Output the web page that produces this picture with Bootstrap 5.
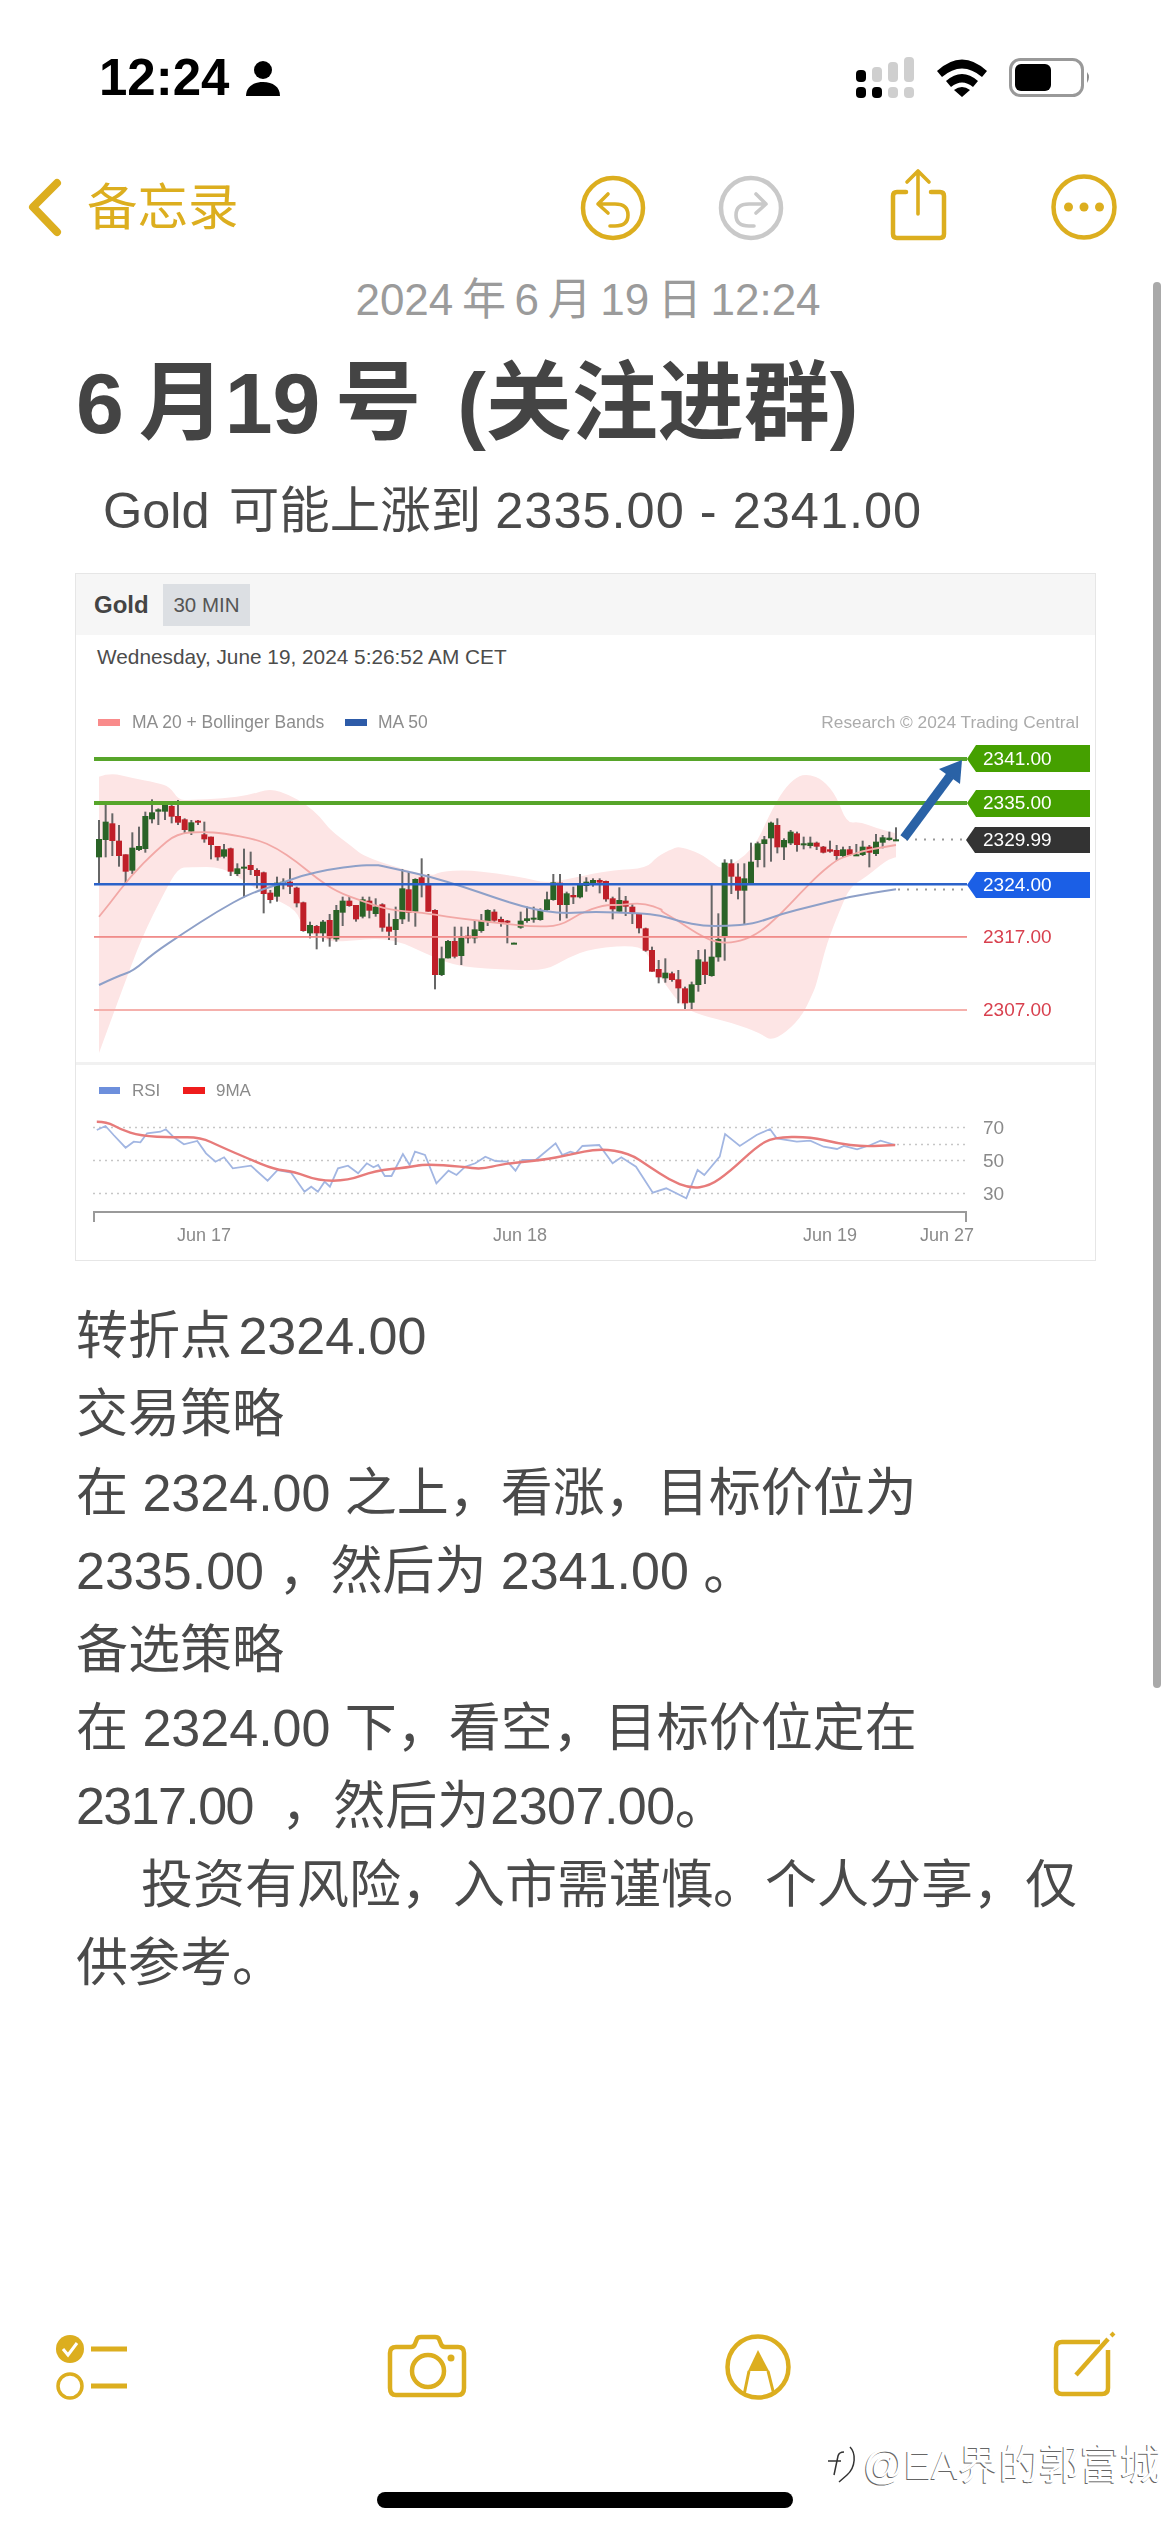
<!DOCTYPE html>
<html lang="zh">
<head>
    <meta charset="UTF-8">
    <meta name="viewport" content="width=device-width, initial-scale=1.0">
    <title>备忘录</title>
    <link href="https://cdn.jsdelivr.net/npm/bootstrap@5.3.0/dist/css/bootstrap.min.css" rel="stylesheet">
    <style>
        html, body { margin: 0; background: #fff; }
        .phone {
            width: 1170px;
            height: 2532px;
            overflow: hidden;
            font-family: "Liberation Sans", "Noto Sans CJK SC", sans-serif;
            color: #4a4a4a;
        }
        .phone svg { display: block; flex: none; }

        /* status bar */
        .status-row { height: 165px; padding: 50px 0 0 99px; }
        .status-time { font-size: 51px; font-weight: 700; line-height: 55px; color: #000; width: 147px; }
        .status-person { margin-top: 11px; }
        .status-icons { margin: 6px 0 0 573px; }

        /* notes nav */
        .notes-nav { height: 86px; padding-left: 24px; color: #dcae1f; }
        .back-label { font-size: 50.5px; line-height: 86px; margin-left: 23px; width: 490px; }
        .nav-gap-redo { margin-left: 65px; }
        .nav-gap-share { margin-left: 99px; }
        .nav-gap-more { margin-left: 98px; }

        /* note header */
        .note-date { font-size: 44px; line-height: 98px; color: #9b9b9b; text-align: center; width: 1176px; word-spacing: -3.6px; }
        .note-title { font-size: 86px; font-weight: 700; line-height: 108px; color: #444; margin: 0; padding-left: 76px; white-space: nowrap; word-spacing: -9px; }
        .title-paren { margin-left: 21px; }
        .note-sub { font-size: 50.5px; line-height: 108px; padding-left: 103px; white-space: nowrap; }
        .sub-symbol { margin-right: 5px; }
        .num-wide { letter-spacing: 1px; }

        /* chart */
        .chart-box { width: 1021px; height: 688px; margin: 8px 0 0 75px; border: 1px solid #e6e6e6; color: #444; }
        .chart-head { height: 61px; background: #f6f6f6; padding-left: 18px; }
        .chart-symbol { font-size: 24px; font-weight: 700; width: 69px; }
        .chart-chip { width: 87px; height: 42px; background: #dcdfe3; font-size: 20.5px; line-height: 42px; text-align: center; color: #555; }
        .chart-date { height: 45px; padding-left: 21px; font-size: 20.8px; line-height: 44px; color: #4c4c4c; }
        .chart-svg { filter: blur(.55px); }
        .chart-svg text { font-family: "Liberation Sans", sans-serif; }

        /* note body */
        .note-body { margin-top: 36px; padding-left: 76px; font-size: 52px; line-height: 78.4px; white-space: pre; }
        .pivot-line { word-spacing: -8px; }
        .num-tight { letter-spacing: -1.6px; margin-right: 14px; }
        .num-gap { margin-left: 1px; letter-spacing: -.5px; }
        .note-indent { padding-left: 65px; }

        /* bottom */
        .tool-row { margin-top: auto; height: 80px; margin-bottom: 84px; padding-left: 52px; }
        .tool-gap-camera { margin-left: 254px; }
        .tool-gap-markup { margin-left: 253px; }
        .tool-gap-compose { margin-left: 259px; }
        .home-bar { width: 416px; height: 16px; margin: 0 0 24px 377px; border-radius: 8px; background: #000; }

        .scroll-thumb { position: absolute; left: 1153px; top: 282px; width: 8px; height: 1406px; border-radius: 4px; background: #a9a9a9; }
        .watermark { position: absolute; left: 825px; top: 2441px; font-size: 40.5px; line-height: 48px; color: #fff; text-shadow: -1px 1px 0 #666; white-space: nowrap; }
        .watermark svg { position: absolute; left: -3px; top: 0; }
        .watermark span { margin-left: 38px; }
    </style>
</head>
<body>
<div class="phone position-relative d-flex flex-column">

    <div class="status-row d-flex align-items-start">
        <div class="status-time">12:24</div>
        <svg class="status-person" width="34" height="36" viewBox="246 61 34 36">
            <circle cx="263" cy="70" r="9" fill="#000"/>
            <path d="M246 96c0-9 7-14 17-14s17 5 17 14z" fill="#000"/>
        </svg>
        <svg class="status-icons" width="240" height="42" viewBox="853 56 240 42">
            <g fill="#000">
                <rect x="856" y="70" width="10" height="12" rx="4"/>
                <rect x="856" y="87" width="10" height="11" rx="4"/>
                <rect x="872" y="87" width="10" height="11" rx="4"/>
            </g>
            <g fill="#cfcfcf">
                <rect x="872" y="67" width="10" height="15" rx="4"/>
                <rect x="888" y="62" width="10" height="20" rx="4"/>
                <rect x="904" y="57" width="10" height="25" rx="4"/>
                <rect x="888" y="87" width="10" height="11" rx="4"/>
                <rect x="904" y="87" width="10" height="11" rx="4"/>
            </g>
            <path d="M937 71q25-23 50 0l-5 6q-20-17-40 0zM946 81q16-14 32 0l-5 6q-11-9-22 0zM954 90q8-6 16 0l-8 7z" fill="#000"/>
            <rect x="1010.5" y="59.5" width="72" height="36" rx="10" fill="none" stroke="#999" stroke-width="3"/>
            <rect x="1015" y="64" width="36" height="27" rx="6" fill="#000"/>
            <path d="M1087 72q4 5 0 11z" fill="#8a8a8a"/>
        </svg>
    </div>

    <div class="notes-nav d-flex align-items-center">
        <svg width="40" height="62" viewBox="24 177 40 62">
            <path d="M57 183 33 207l24 25" fill="none" stroke="#dcae1f" stroke-width="8" stroke-linecap="round" stroke-linejoin="round"/>
        </svg>
        <div class="back-label">备忘录</div>
        <svg width="73" height="86" viewBox="577 165 73 86" fill="none" stroke="#dcae1f" stroke-linecap="round" stroke-linejoin="round">
            <circle cx="613" cy="208" r="30" stroke-width="4.5"/>
            <path d="M608 194l-10 10 10 9M598 204h17q13 0 13 11 0 11-13 11h-5" stroke-width="3.6"/>
        </svg>
        <svg class="nav-gap-redo" width="73" height="86" viewBox="715 165 73 86" fill="none" stroke="#c9c9c9" stroke-linecap="round" stroke-linejoin="round">
            <circle cx="751" cy="208" r="30" stroke-width="4.5"/>
            <path d="M756 194l10 10-10 9M766 204h-17q-13 0-13 11 0 11 13 11h5" stroke-width="3.6"/>
        </svg>
        <svg class="nav-gap-share" width="63" height="86" viewBox="887 165 63 86" fill="none" stroke="#dcae1f" stroke-linecap="round" stroke-linejoin="round">
            <path d="M906 192h-9q-4 0-4 4v38q0 4 4 4h43q4 0 4-4v-38q0-4-4-4h-9" stroke-width="4.5"/>
            <path d="M918 214v-43M907 182l11-11 11 11" stroke-width="3.6"/>
        </svg>
        <svg class="nav-gap-more" width="72" height="86" viewBox="1048 165 72 86">
            <circle cx="1084" cy="207" r="30.5" fill="none" stroke="#dcae1f" stroke-width="4.5"/>
            <g fill="#dcae1f"><circle cx="1068.500" cy="207" r="4.500"/><circle cx="1084" cy="207" r="4.500"/><circle cx="1099.500" cy="207" r="4.500"/></g>
        </svg>
    </div>

    <div class="note-date">2024 年 6 月 19 日 12:24</div>
    <h1 class="note-title">6 月19 号<span class="title-paren"> (关注进群)</span></h1>
    <div class="note-sub"><span class="sub-symbol">Gold</span> 可能上涨到 <span class="num-wide">2335.00 - 2341.00</span></div>

    <div class="chart-box">
        <div class="chart-head d-flex align-items-center">
            <div class="chart-symbol">Gold</div>
            <div class="chart-chip">30 MIN</div>
        </div>
        <div class="chart-date">Wednesday, June 19, 2024 5:26:52 AM CET</div>
        <svg class="chart-svg" id="plot" width="1019" height="581" viewBox="76 680 1019 581">
            <path id="band" fill="#fde5e5"/>
            <g id="candles"></g>
            <path id="ma20" fill="none" stroke="#f2a8a6" stroke-width="1.800"/>
            <path id="ma50" fill="none" stroke="#8ea0c8" stroke-width="2"/>

            <g>
                <rect x="94" y="757" width="873" height="4" fill="#57a52a"/>
                <rect x="94" y="801" width="873" height="4" fill="#57a52a"/>
                <rect x="94" y="883" width="873" height="2.500" fill="#2b62c9"/>
                <rect x="94" y="936" width="873" height="1.800" fill="#f08c8a"/>
                <rect x="94" y="1009" width="873" height="2" fill="#f5b0ac"/>
            </g>
            <path d="M906 839.500h60M898 889.500h68" stroke="#999" stroke-width="2" stroke-dasharray="2 7"/>

            <path d="M904 838 950 776" stroke="#2a62a6" stroke-width="9"/>
            <path d="M962 760 960 784 939 769z" fill="#2a62a6"/>

            <g fill="#45a000"><path d="M967 759l9-14h114v27H976z"/><path d="M967 803l9-13h114v27H976z"/></g>
            <path d="M966 840l9-13h115v26H975z" fill="#333"/>
            <path d="M967 885l9-13h114v26H976z" fill="#1b5fe6"/>
            <g font-size="19" fill="#fff">
                <text x="983" y="765">2341.00</text>
                <text x="983" y="809">2335.00</text>
                <text x="983" y="846">2329.99</text>
                <text x="983" y="891">2324.00</text>
            </g>
            <g font-size="19" fill="#d8404e">
                <text x="983" y="943">2317.00</text>
                <text x="983" y="1016">2307.00</text>
            </g>

            <rect x="98" y="719" width="22" height="7" fill="#f98b8b"/>
            <rect x="345" y="719" width="22" height="7" fill="#2d5ba8"/>
            <g font-size="17.5" fill="#8d8d8d">
                <text x="132" y="728">MA 20 + Bollinger Bands</text>
                <text x="378" y="728">MA 50</text>
            </g>
            <text x="1079" y="728" font-size="17.3" fill="#ababab" text-anchor="end">Research © 2024 Trading Central</text>

            <rect x="76" y="1062" width="1019" height="3" fill="#f1f1f1"/>

            <rect x="99" y="1087" width="21" height="7" fill="#6d8fdc"/>
            <rect x="183" y="1087" width="22" height="7" fill="#ef1c1c"/>
            <g font-size="17" fill="#8a8a8a">
                <text x="132" y="1096">RSI</text>
                <text x="216" y="1096">9MA</text>
            </g>
            <path d="M93 1127.500h874M93 1160.500h874M93 1193.500h874M897 1144.500h70" stroke="#c6c6c6" stroke-width="1.500" stroke-dasharray="2 4"/>
            <path id="rsi" fill="none" stroke="#a2b6e2" stroke-width="1.800"/>
            <path id="rsima" fill="none" stroke="#e77b7a" stroke-width="2.400"/>
            <path d="M94 1222v-10h872v10" fill="none" stroke="#9a9a9a" stroke-width="2"/>
            <g font-size="19" fill="#8a8a8a">
                <text x="983" y="1134">70</text>
                <text x="983" y="1167">50</text>
                <text x="983" y="1200">30</text>
            </g>
            <g font-size="18" fill="#8a8a8a" text-anchor="middle">
                <text x="204" y="1241">Jun 17</text>
                <text x="520" y="1241">Jun 18</text>
                <text x="830" y="1241">Jun 19</text>
                <text x="947" y="1241">Jun 27</text>
            </g>
        </svg>
    </div>

    <div class="note-body"><div class="pivot-line">转折点 2324.00</div><div>交易策略</div><div>在 2324.00 之上，看涨，目标价位为</div><div>2335.00 ，然后为 2341.00 。</div><div>备选策略</div><div>在 2324.00 下，看空，目标价位定在</div><div><span class="num-tight">2317.00</span> ，然后为<span class="num-gap">2307.00</span>。</div><div class="note-indent">投资有风险，入市需谨慎。个人分享，仅</div><div>供参考。</div></div>

    <div class="tool-row d-flex align-items-center">
        <svg width="80" height="80" viewBox="52 2325 80 80">
            <circle cx="70" cy="2346" r="14" fill="#dcae1f"/>
            <path d="M63 2346l5 6 9-12" fill="none" stroke="#fff" stroke-width="3"/>
            <circle cx="70" cy="2383" r="12" fill="none" stroke="#dcae1f" stroke-width="3.500"/>
            <path d="M91 2346h36M91 2383h36" stroke="#dcae1f" stroke-width="5"/>
        </svg>
        <svg class="tool-gap-camera" width="84" height="80" viewBox="386 2325 84 80" fill="none" stroke="#dcae1f" stroke-width="4.500" stroke-linejoin="round">
            <path d="M396 2344h15q3 0 4-3l2-5q1-2 4-2h14q3 0 4 2l2 5q1 3 4 3h13q6 0 6 6v35q0 7-6 7h-62q-6 0-6-7v-35q0-6 6-6z"/>
            <circle cx="428" cy="2368" r="16"/>
            <circle cx="451" cy="2355" r="3.500" fill="#dcae1f" stroke="none"/>
        </svg>
        <svg class="tool-gap-markup" width="70" height="80" viewBox="723 2325 70 80" fill="none" stroke="#dcae1f">
            <circle cx="758" cy="2364" r="30.500" stroke-width="4.500"/>
            <path d="M758 2347l-10 21h21z" fill="#dcae1f" stroke="none"/>
            <path d="M749 2368l-5 24M768 2368l6 24" stroke-width="3"/>
        </svg>
        <svg class="tool-gap-compose" width="66" height="80" viewBox="1052 2325 66 80" fill="none" stroke="#dcae1f">
            <path d="M1100 2339h-38q-6 0-6 6v40q0 6 6 6h40q6 0 6-6v-38" stroke-width="4.500"/>
            <path d="M1076 2372l32-36" stroke-width="4.500"/>
            <path d="M1111 2333l3-3" stroke-width="4"/>
        </svg>
    </div>
    <div class="home-bar"></div>

    <div class="scroll-thumb"></div>
    <div class="watermark">
        <svg width="40" height="48" viewBox="0 0 40 48" fill="none" stroke="#333" stroke-width="1.500">
            <path d="M12 34 16 15q1-4 6-4M6 20h13M28 6c6 6 6 20-3 28l-8 7"/>
        </svg>
        <span>@EA界的郭富城</span>
    </div>
</div>

<script>
    // candle coords are read off three crops: [x, high, low, top, bottom, colour], y = 770 + v / 3
    const crops = [
        [90, [[27,150,345,207,262,'g'],[47,95,262,155,210,'g'],[67,130,258,160,213,'r'],[87,165,290,212,258,'r'],[107,253,345,253,305,'r'],[127,187,312,233,302,'g'],[147,170,243,228,240,'g'],[166,125,248,138,237,'g'],[186,88,160,127,148,'g'],[205,115,165,118,125,'g'],[225,95,150,103,125,'g'],[245,95,160,108,140,'r'],[264,90,165,138,158,'r'],[284,145,192,148,180,'r'],[304,150,195,157,185,'g'],[324,150,165,152,158,'r'],[343,155,218,193,208,'r'],[363,200,268,200,225,'r'],[383,228,272,228,262,'r'],[402,222,265,238,260,'g'],[422,233,318,235,305,'r'],[442,280,318,295,312,'g'],[462,236,382,290,296,'g'],[482,245,315,285,300,'r'],[501,295,355,300,318,'r'],[521,305,430,307,372,'r'],[541,360,400,368,390,'r'],[561,320,395,338,380,'g'],[580,325,358,335,345,'g'],[600,295,372,335,350,'r'],[620,350,412,353,400,'r'],[640,395,485,397,483,'r'],[660,455,505,465,490,'g'],[680,465,538,468,490,'r'],[699,450,515,455,490,'g'],[719,432,530,450,505,'r'],[739,405,515,420,508,'g'],[758,380,468,392,428,'g'],[778,378,410,392,408,'r'],[798,405,455,405,448,'r'],[818,380,445,388,440,'g'],[838,380,445,392,422,'r'],[857,385,440,410,432,'g'],[877,400,485,403,473,'r']]],
        [380, [[27,430,510,470,485,'r'],[47,410,525,447,480,'g'],[67,297,462,355,448,'g'],[86,305,455,358,428,'r'],[106,325,470,327,425,'g'],[125,265,382,322,343,'r'],[145,312,425,340,425,'r'],[165,418,658,420,615,'r'],[185,530,618,565,615,'g'],[204,510,565,513,565,'g'],[224,470,565,513,560,'r'],[244,470,585,503,558,'g'],[264,470,520,497,505,'r'],[284,450,520,478,505,'g'],[304,432,488,452,483,'g'],[323,418,468,420,455,'g'],[343,418,458,425,452,'r'],[363,440,470,447,458,'r'],[382,450,520,452,456,'r'],[402,518,520,518,521,'g'],[422,425,476,452,473,'g'],[441,410,458,445,453,'g'],[461,410,458,443,448,'g'],[481,415,452,420,450,'g'],[501,365,422,388,420,'g'],[520,312,392,337,390,'g'],[540,312,452,338,405,'r'],[560,365,445,370,405,'g'],[580,350,402,375,382,'r'],[600,312,385,345,382,'g'],[619,322,365,335,348,'g'],[639,325,350,330,340,'g'],[659,325,370,330,338,'r'],[678,332,395,333,388,'r'],[698,380,448,385,418,'r'],[718,352,428,390,425,'g'],[737,378,438,392,410,'r'],[757,400,462,410,430,'r'],[777,430,490,432,475,'r'],[797,473,545,475,542,'r'],[816,530,605,540,605,'r'],[836,570,640,597,622,'r'],[856,565,638,608,625,'g'],[876,605,635,610,630,'r']]],
        [660, [[55,600,700,628,655,'r'],[75,650,720,655,700,'r'],[95,635,720,643,698,'g'],[115,540,665,568,645,'g'],[135,538,642,575,615,'r'],[155,345,620,560,618,'g'],[175,430,575,507,562,'g'],[194,268,572,278,500,'g'],[214,268,372,280,320,'r'],[234,280,388,320,362,'r'],[253,280,465,325,362,'g'],[273,218,345,275,340,'g'],[293,215,292,220,270,'g'],[313,198,292,208,222,'g'],[333,155,275,158,205,'g'],[352,145,250,165,232,'r'],[372,205,270,210,232,'g'],[392,180,225,185,220,'g'],[411,185,245,190,225,'r'],[431,200,238,220,226,'g'],[451,200,235,218,228,'g'],[470,215,240,218,230,'r'],[490,228,250,230,248,'r'],[510,212,248,238,245,'r'],[530,225,272,240,258,'r'],[549,230,262,238,258,'g'],[569,228,258,238,255,'r'],[589,222,258,253,257,'g'],[608,212,258,230,255,'g'],[628,225,292,230,248,'r'],[648,192,258,215,252,'g'],[668,195,235,202,218,'g'],[688,185,212,203,210,'g'],[708,172,212,208,210,'g']]]
    ];
    const toY = v => 770 + v / 3;
    let svgCandles = '';
    crops.forEach(([left, rows]) => rows.forEach(([x, hi, lo, top, bot, c]) => {
        const px = left + x / 3;
        const fill = c === 'g' ? '#2a6327' : '#bf1f28';
        svgCandles += `<rect x="${px - 1}" y="${toY(hi)}" width="2" height="${(lo - hi) / 3}" fill="#666"/>`;
        svgCandles += `<rect x="${px - 3}" y="${toY(top)}" width="6" height="${Math.max((bot - top) / 3, 2)}" fill="${fill}"/>`;
    }));
    document.getElementById('candles').innerHTML = svgCandles;

    // straight segments for the noisy rsi, midpoint curves for the averages and the band
    const line = pts => 'M' + pts.map(p => p.map(n => n.toFixed(1)).join(' ')).join('L');
    const curve = pts => {
        let d = `M${pts[0][0].toFixed(1)} ${pts[0][1].toFixed(1)}`;
        for (let i = 1; i < pts.length - 1; i++) {
            const mx = (pts[i][0] + pts[i + 1][0]) / 2, my = (pts[i][1] + pts[i + 1][1]) / 2;
            d += `Q${pts[i][0].toFixed(1)} ${pts[i][1].toFixed(1)} ${mx.toFixed(1)} ${my.toFixed(1)}`;
        }
        const last = pts[pts.length - 1];
        return d + `L${last[0].toFixed(1)} ${last[1].toFixed(1)}`;
    };
    const from = (left, pts) => pts.map(([x, y]) => [left + x / 3, 770 + y / 3]);

    const ma20 = [...from(90, [[27,440],[60,400],[120,320],[200,240],[260,190],[340,185],[400,190],[500,208],[560,235],[620,275],[680,325],[740,365],[820,395]]),
        ...from(380, [[30,420],[130,428],[200,440],[280,450],[380,462],[460,470],[540,468],[600,430],[670,405],[720,405],[790,398],[850,420]]),
        ...from(660, [[0,422],[50,450],[110,490],[160,515],[220,520],[290,495],[360,435],[420,370],[480,310],[530,270],[560,258],[620,240],[708,225]])];
    document.getElementById('ma20').setAttribute('d', curve(ma20));

    const ma50 = [...from(90, [[27,645],[80,620],[130,603],[190,550],[280,490],[380,425],[480,370],[560,345],[640,315],[720,298],[800,287],[860,285]]),
        ...from(380, [[0,287],[60,300],[150,320],[250,350],[350,385],[430,410],[500,425],[560,430],[640,425],[780,430]]),
        ...from(660, [[0,435],[60,455],[130,468],[200,468],[280,462],[370,430],[450,410],[550,385],[630,370],[708,358]])];
    document.getElementById('ma50').setAttribute('d', curve(ma50));

    const upper = [...from(90, [[27,20],[60,8],[130,25],[200,38],[240,50],[265,90],[300,90],[400,85],[480,75],[540,55],[600,75],[650,105],[690,140],[720,180],[780,225],[830,265]]),
        ...from(380, [[150,320],[180,305],[260,300],[350,310],[440,325],[500,340],[620,315],[700,300],[800,295],[830,260],[880,235]]),
        ...from(660, [[60,230],[120,250],[160,280],[190,300],[280,240],[330,130],[370,60],[410,20],[445,12],[490,30],[530,80],[560,160],[600,155],[650,175],[708,190],[708,190],[708,262],[708,262],[680,270],[620,320],[570,350],[540,420],[500,520],[470,640]])];
    const lower = [[813,993],[800,1020],[773,1042],[760,1033],[733,1023],[700,1015],[683,1007],[665,985],[650,958],[640,945],[593,948],[567,958],[547,970],[513,970],[460,967],[433,957],[390,937],[340,942],[323,940],[303,930],[297,910],[270,897],[247,883],[223,867],[190,867],[178,868],[164,893],[142,937],[121,993],[99,1053]];
    document.getElementById('band').setAttribute('d', curve(upper.concat(lower)) + 'Z');

    // rsi panel comes from a wider crop
    const rsiPt = ([x, y]) => [60 + x / 1.493, 1050 + y / 3];
    const rsi = [[55,240],[68,228],[80,255],[98,293],[110,275],[120,277],[130,250],[150,245],[158,238],[170,262],[185,283],[205,273],[218,310],[232,335],[245,322],[258,355],[285,347],[310,392],[325,360],[345,368],[365,425],[375,410],[385,425],[395,395],[403,410],[415,355],[430,347],[445,370],[458,340],[468,352],[475,345],[485,378],[495,378],[512,312],[522,345],[530,305],[545,315],[562,400],[580,362],[592,375],[605,350],[620,340],[635,320],[650,333],[668,335],[680,362],[690,330],[710,330],[740,280],[750,315],[762,305],[770,310],[780,288],[805,285],[825,340],[838,322],[860,350],[885,428],[905,415],[935,445],[952,360],[962,375],[985,320],[993,252],[1015,288],[1040,255],[1060,237],[1070,265],[1100,275],[1120,272],[1140,290],[1160,297],[1170,288],[1190,298],[1210,285],[1225,272],[1247,285]];
    const rsiMa = [[55,215],[70,215],[90,238],[120,258],[170,262],[210,262],[240,290],[280,325],[320,358],[350,365],[385,392],[430,392],[470,362],[520,352],[545,342],[600,350],[630,358],[660,342],[720,330],[760,315],[805,295],[850,310],[880,350],[910,390],[940,415],[970,408],[1000,365],[1040,290],[1065,262],[1120,260],[1160,280],[1200,290],[1247,285]];
    document.getElementById('rsi').setAttribute('d', line(rsi.map(rsiPt)));
    document.getElementById('rsima').setAttribute('d', curve(rsiMa.map(rsiPt)));
</script>
</body>
</html>
